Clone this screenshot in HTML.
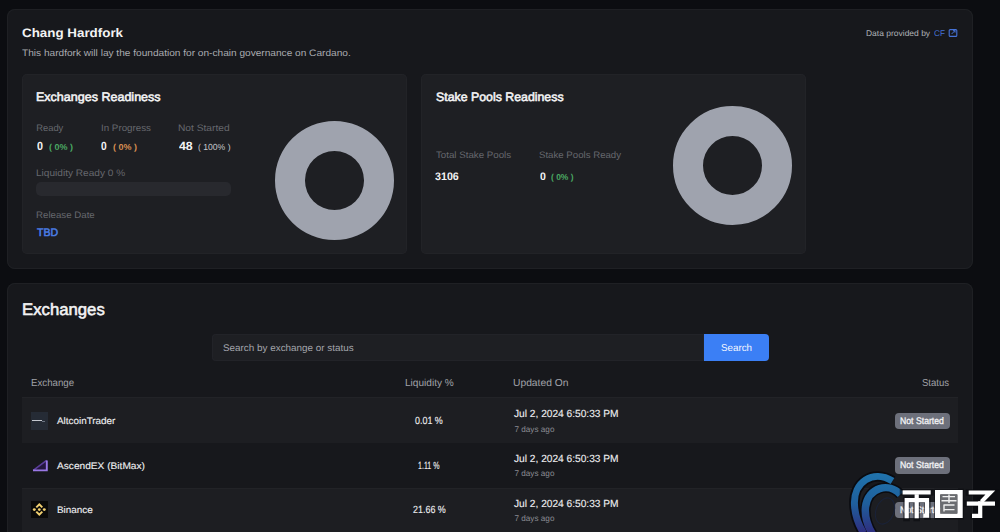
<!DOCTYPE html>
<html><head><meta charset="utf-8">
<style>
*{margin:0;padding:0;box-sizing:border-box}
html,body{width:1000px;height:532px;overflow:hidden;background:#0c0d11;font-family:"Liberation Sans",sans-serif}
.a{position:absolute}
.t{position:absolute;white-space:nowrap;line-height:normal;transform-origin:0 0;text-rendering:geometricPrecision}
.panel{position:absolute;background:#17181c;border-radius:8px;box-shadow:inset 0 0 0 1px #1f2024}
.card{position:absolute;background:#1e1f23;border-radius:5px;box-shadow:inset 0 0 0 1px #222327}
.donut{position:absolute;border-radius:50%;border:30px solid #9fa3ae}
.row{position:absolute;left:22px;width:936px;height:45px;background:#1d1e22}
.badge{position:absolute;left:895px;width:55px;height:16.5px;background:#6d707b;border-radius:4px}
</style></head>
<body>
<div class="panel" style="left:7.3px;top:9px;width:965.7px;height:260px"></div>
<div class="card" style="left:22px;top:73.5px;width:385px;height:180.5px"></div>
<div class="card" style="left:421px;top:73.5px;width:385px;height:180.5px"></div>
<div class="a" style="left:36px;top:182px;width:194.5px;height:14px;background:#28292e;border-radius:5px"></div>
<div class="donut" style="left:274.5px;top:121.3px;width:119.5px;height:119px"></div>
<div class="donut" style="left:673.2px;top:106.4px;width:119px;height:119px"></div>
<svg class="a" style="left:948px;top:29px" width="10" height="8" viewBox="0 0 10 8"><rect x="1.2" y="0.6" width="7.6" height="6.8" rx="1" fill="none" stroke="#4672d6" stroke-width="1.1"/><path d="M3.6 5 L7 1.6 M5 1.6 H7 V3.6" fill="none" stroke="#4672d6" stroke-width="1"/></svg>

<div class="panel" style="left:7.3px;top:282.5px;width:965.7px;height:280px"></div>
<div class="a" style="left:211.5px;top:333.7px;width:492.5px;height:27.5px;background:#1e1f23;border-radius:4px 0 0 4px;box-shadow:inset 0 0 0 1px #222328"></div>
<div class="a" style="left:704px;top:333.8px;width:64.5px;height:27.2px;background:#3b7ff5;border-radius:0 4px 4px 0"></div>
<div class="row" style="top:397.3px;height:45.9px;box-shadow:inset 0 1px 0 #222327"></div>
<div class="row" style="top:487.6px;height:45px;box-shadow:inset 0 1px 0 #222327"></div>
<div class="badge" style="top:412.6px"></div>
<div class="badge" style="top:457.2px"></div>
<div class="badge" style="top:501.8px"></div>
<!-- logos -->
<div class="a" style="left:31px;top:412px;width:17px;height:18px;background:#252b35"></div>
<div class="a" style="left:31.5px;top:420px;width:10.5px;height:1.3px;background:#c4c8cf"></div>
<div class="a" style="left:42px;top:420.5px;width:3px;height:1px;background:#6a7280"></div>
<svg class="a" style="left:30px;top:457px" width="20" height="16" viewBox="0 0 20 16"><path d="M3 13.4 L16.8 3.2 V13.4 Z" fill="#24163f"/><path d="M3.2 13.3 L16.6 3.4" stroke="#5a3d9a" stroke-width="1.6" fill="none"/><path d="M16.8 3.5 V13.4 H3" stroke="#9a78e6" stroke-width="1.9" fill="none"/></svg>
<div class="a" style="left:31px;top:501px;width:17px;height:17px;background:#0a0a0a"></div>
<svg class="a" style="left:31px;top:501px" width="17" height="17" viewBox="0 0 17 17"><g fill="#f2d070"><path d="M8.3 2.0 L12.0 5.7 L10.6 7.1 L8.3 4.8 L6.0 7.1 L4.6 5.7 Z"/><path d="M8.3 15.0 L12.0 11.3 L10.6 9.9 L8.3 12.2 L6.0 9.9 L4.6 11.3 Z"/><circle cx="3.3" cy="8.6" r="1.45"/><circle cx="13.3" cy="8.6" r="1.45"/><circle cx="8.3" cy="8.6" r="1.35"/></g></svg>
<div class="t" style="left:22.40px;top:26.40px;font-size:12.35px;font-weight:bold;color:#f3f3f4;transform:scaleX(1.083);">Chang Hardfork</div>
<div class="t" style="left:22.30px;top:47.80px;font-size:9.45px;font-weight:normal;color:#a9abb0;transform:scaleX(1.071);">This hardfork will lay the foundation for on-chain governance on Cardano.</div>
<div class="t" style="left:865.70px;top:28.00px;font-size:8.29px;font-weight:normal;color:#b0b2b7;transform:scaleX(1.024);">Data provided by</div>
<div class="t" style="left:934.00px;top:28.00px;font-size:8.29px;font-weight:normal;color:#4672d6;transform:scaleX(0.984);">CF</div>
<div class="t" style="left:35.67px;top:89.70px;font-size:12.21px;font-weight:normal;-webkit-text-stroke:0.55px #f3f3f4;color:#f3f3f4;transform:scaleX(1.026);">Exchanges Readiness</div>
<div class="t" style="left:435.60px;top:89.70px;font-size:12.21px;font-weight:normal;-webkit-text-stroke:0.55px #f3f3f4;color:#f3f3f4;transform:scaleX(1.011);">Stake Pools Readiness</div>
<div class="t" style="left:36.20px;top:122.00px;font-size:9.4px;font-weight:normal;color:#66686e;">Ready</div>
<div class="t" style="left:100.50px;top:122.00px;font-size:9.4px;font-weight:normal;color:#66686e;transform:scaleX(1.042);">In Progress</div>
<div class="t" style="left:178.20px;top:122.00px;font-size:9.4px;font-weight:normal;color:#66686e;transform:scaleX(1.089);">Not Started</div>
<div class="t" style="left:36.70px;top:139.00px;font-size:11.92px;font-weight:bold;color:#f3f3f4;transform:scaleX(0.900);">0</div>
<div class="t" style="left:48.90px;top:142.00px;font-size:8.6px;font-weight:bold;color:#4aa862;transform:scaleX(1.045);">(&nbsp;0%&nbsp;)</div>
<div class="t" style="left:101.00px;top:139.00px;font-size:11.92px;font-weight:bold;color:#f3f3f4;transform:scaleX(0.857);">0</div>
<div class="t" style="left:113.00px;top:142.00px;font-size:8.6px;font-weight:bold;color:#d98f52;transform:scaleX(1.041);">(&nbsp;0%&nbsp;)</div>
<div class="t" style="left:178.70px;top:139.00px;font-size:11.92px;font-weight:bold;color:#f3f3f4;transform:scaleX(1.035);">48</div>
<div class="t" style="left:198.00px;top:142.00px;font-size:8.8px;font-weight:normal;color:#c9cacf;transform:scaleX(0.978);">(&nbsp;100%&nbsp;)</div>
<div class="t" style="left:36.20px;top:167.40px;font-size:9.4px;font-weight:normal;color:#66686e;transform:scaleX(1.076);">Liquidity Ready 0 %</div>
<div class="t" style="left:36.20px;top:208.80px;font-size:9.4px;font-weight:normal;color:#66686e;transform:scaleX(1.034);">Release Date</div>
<div class="t" style="left:37.20px;top:227.00px;font-size:11px;font-weight:normal;-webkit-text-stroke:0.55px #4a7de6;color:#4a7de6;transform:scaleX(0.961);">TBD</div>
<div class="t" style="left:435.50px;top:149.00px;font-size:9.4px;font-weight:normal;color:#66686e;transform:scaleX(1.036);">Total Stake Pools</div>
<div class="t" style="left:538.80px;top:149.00px;font-size:9.4px;font-weight:normal;color:#66686e;transform:scaleX(1.029);">Stake Pools Ready</div>
<div class="t" style="left:435.30px;top:170.70px;font-size:10.9px;font-weight:bold;color:#f3f3f4;transform:scaleX(0.981);">3106</div>
<div class="t" style="left:539.70px;top:170.70px;font-size:10.9px;font-weight:bold;color:#f3f3f4;transform:scaleX(0.967);">0</div>
<div class="t" style="left:551.40px;top:171.70px;font-size:8.6px;font-weight:bold;color:#4aa862;transform:scaleX(0.980);">(&nbsp;0%&nbsp;)</div>
<div class="t" style="left:21.99px;top:299.50px;font-size:16.57px;font-weight:normal;-webkit-text-stroke:0.55px #f3f3f4;color:#f3f3f4;transform:scaleX(1.010);">Exchanges</div>
<div class="t" style="left:223.20px;top:343.20px;font-size:9.7px;font-weight:normal;color:#a3a5ab;transform:scaleX(1.020);">Search by exchange or status</div>
<div class="t" style="left:720.90px;top:343.10px;font-size:10px;font-weight:normal;color:#f6f8ff;transform:scaleX(0.980);">Search</div>
<div class="t" style="left:30.70px;top:378.30px;font-size:10.17px;font-weight:normal;color:#a0a2a8;transform:scaleX(0.953);">Exchange</div>
<div class="t" style="left:404.60px;top:378.30px;font-size:10.17px;font-weight:normal;color:#a0a2a8;transform:scaleX(0.994);">Liquidity %</div>
<div class="t" style="left:513.40px;top:378.30px;font-size:10.17px;font-weight:normal;color:#a0a2a8;transform:scaleX(1.013);">Updated On</div>
<div class="t" style="left:922.00px;top:378.30px;font-size:10.17px;font-weight:normal;color:#a0a2a8;transform:scaleX(0.940);">Status</div>
<div class="t" style="left:56.50px;top:415.90px;font-size:9.59px;font-weight:normal;-webkit-text-stroke:0.12px #eeeef0;color:#eeeef0;transform:scaleX(1.031);">AltcoinTrader</div>
<div class="t" style="left:415.30px;top:416.20px;font-size:10.4px;font-weight:normal;-webkit-text-stroke:0.12px #eeeef0;color:#eeeef0;transform:scaleX(0.860);">0.01 %</div>
<div class="t" style="left:514.40px;top:409.30px;font-size:10.32px;font-weight:normal;-webkit-text-stroke:0.12px #eeeef0;color:#eeeef0;transform:scaleX(0.986);">Jul 2, 2024 6:50:33 PM</div>
<div class="t" style="left:514.40px;top:424.75px;font-size:8.2px;font-weight:normal;color:#8a8c92;">7 days ago</div>
<div class="t" style="left:900.40px;top:415.60px;font-size:9.6px;font-weight:normal;-webkit-text-stroke:0.3px #f4f4f6;color:#f4f4f6;transform:scaleX(0.905);">Not Started</div>
<div class="t" style="left:56.50px;top:460.50px;font-size:9.59px;font-weight:normal;-webkit-text-stroke:0.12px #eeeef0;color:#eeeef0;transform:scaleX(1.059);">AscendEX (BitMax)</div>
<div class="t" style="left:418.00px;top:460.80px;font-size:10.4px;font-weight:normal;-webkit-text-stroke:0.12px #eeeef0;color:#eeeef0;transform:scaleX(0.680);">1.11 %</div>
<div class="t" style="left:514.40px;top:453.90px;font-size:10.32px;font-weight:normal;-webkit-text-stroke:0.12px #eeeef0;color:#eeeef0;transform:scaleX(0.986);">Jul 2, 2024 6:50:33 PM</div>
<div class="t" style="left:514.40px;top:469.35px;font-size:8.2px;font-weight:normal;color:#8a8c92;">7 days ago</div>
<div class="t" style="left:900.40px;top:460.20px;font-size:9.6px;font-weight:normal;-webkit-text-stroke:0.3px #f4f4f6;color:#f4f4f6;transform:scaleX(0.905);">Not Started</div>
<div class="t" style="left:56.50px;top:505.10px;font-size:9.59px;font-weight:normal;-webkit-text-stroke:0.12px #eeeef0;color:#eeeef0;transform:scaleX(1.035);">Binance</div>
<div class="t" style="left:412.80px;top:505.40px;font-size:10.4px;font-weight:normal;-webkit-text-stroke:0.12px #eeeef0;color:#eeeef0;transform:scaleX(0.860);">21.66 %</div>
<div class="t" style="left:514.40px;top:498.50px;font-size:10.32px;font-weight:normal;-webkit-text-stroke:0.12px #eeeef0;color:#eeeef0;transform:scaleX(0.986);">Jul 2, 2024 6:50:33 PM</div>
<div class="t" style="left:514.40px;top:513.95px;font-size:8.2px;font-weight:normal;color:#8a8c92;">7 days ago</div>
<div class="t" style="left:900.40px;top:504.80px;font-size:9.6px;font-weight:normal;-webkit-text-stroke:0.3px #f4f4f6;color:#f4f4f6;transform:scaleX(0.905);">Not Started</div>
<svg class="a" style="left:0;top:0" width="1000" height="532" viewBox="0 0 1000 532">
<defs><linearGradient id="wg" x1="0" y1="475" x2="0" y2="532" gradientUnits="userSpaceOnUse"><stop offset="0" stop-color="#2072ab"/><stop offset="0.5" stop-color="#1f5f9c"/><stop offset="1" stop-color="#2e2f80"/></linearGradient></defs>
<g fill="none" stroke="#0a0b10" stroke-width="10.5" stroke-linecap="butt">
<path d="M892.5 481 C873 469 853 482 854.5 505 C855 516 858 524 863.5 533"/>
<path d="M900.5 494.5 C889 482 868 487 865.5 507 C864.5 517 867 525 872.5 534"/>
</g>
<g fill="none" stroke="url(#wg)" stroke-linecap="butt">
<path d="M892.5 481 C873 469 853 482 854.5 505 C855 516 858 524 863.5 533" stroke-width="7"/>
<path d="M900.5 494.5 C889 482 868 487 865.5 507 C864.5 517 867 525 872.5 534" stroke-width="7.5"/>
</g>
<ellipse cx="885" cy="511" rx="9" ry="13.5" fill="none" stroke="#1a2238" stroke-width="1.1" transform="rotate(20 885 511)"/>
<g fill="none" stroke="#0a0b0f" stroke-width="6.5" stroke-linecap="square" opacity="0.6">
<path d="M903 492.2 H930.5 M906.5 499.5 V518 M906.5 499.5 H927.4 V516.5 M916.7 494 V518"/>
<path d="M937.4 491.9 H960.7 V516.3 H937.4 Z"/>
<path d="M969 492.4 H991 L981.5 501 M967 503.5 H995 M980.2 501 V516.5 L973.5 516.5"/>
</g>
<g fill="none" stroke="#ffffff" stroke-width="4.2" stroke-linecap="butt" stroke-linejoin="miter">
<path d="M902.6 492.4 H930.7"/>
<path d="M906.7 518.3 V500.2 H927 V515.6 L923.3 515.6"/>
<path d="M916.7 494.2 V518.3"/>
<path d="M968.7 492.5 H990.3 L981.5 501.6"/>
<path d="M966.8 503.6 H995"/>
<path d="M980.2 501.2 V515.8 H972"/>
</g>
<path d="M935 490 H962.7 V518.1 H935 Z M940.3 494.5 V513.5 H957.3 V494.5 Z" fill="#ffffff" fill-rule="evenodd"/>
<rect x="940.3" y="494.5" width="17" height="19" fill="#6a6c70"/>
<g fill="none" stroke="#f0f0f0" stroke-width="1.4">
<path d="M942.5 496.6 H955 M941.5 500.8 H956.5 M943.5 505 H954.5 M944 509.6 H954.5 M944 505 V511.5 M949 494.5 V503"/>
</g>
</svg>

</body></html>
